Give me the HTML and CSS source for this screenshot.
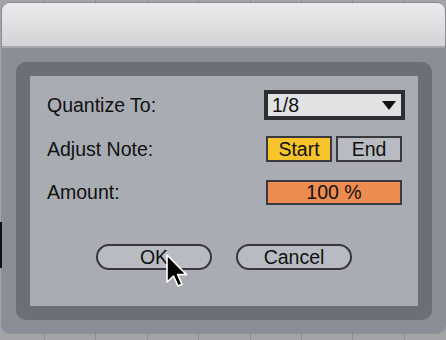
FILE: index.html
```html
<!DOCTYPE html>
<html>
<head>
<meta charset="utf-8">
<link rel="stylesheet" href="styles.css">
</head>
<body>
<div class="desk">
  <div class="sidebar-mark"></div>
  <div class="window">
    <div class="titlebar"></div>
    <div class="body">
      <div class="frame">
        <div class="panel">
          <div class="rows">
            <div class="label">Quantize To:</div>
            <div class="dropdown"><span>1/8</span><svg class="tri" width="14" height="9" viewBox="0 0 14 9"><polygon points="0,0 14,0 7,9" fill="#111"/></svg></div>
            <div class="label label-mid">Adjust Note:</div>
            <div class="toggles"><div class="tog on">Start</div><div class="tog">End</div></div>
            <div class="label">Amount:</div>
            <div class="amount">100 %</div>
          </div>
          <div class="buttons">
            <div class="btn">OK</div>
            <div class="btn">Cancel</div>
          </div>
        </div>
      </div>
    </div>
  </div>
  <svg class="cursor" width="26" height="36" viewBox="0 0 26 36"><path d="M2 2 L2 29 L8.5 23 L13 33 L17 31.2 L12.6 21.6 L21.5 21.6 Z" fill="#000" stroke="#fff" stroke-width="1.6" stroke-linejoin="round"/></svg>
</div>
</body>
</html>
```
FILE: styles.css
```css
html, body { margin: 0; padding: 0; }
body {
  width: 446px;
  height: 340px;
  overflow: hidden;
  font-family: "Liberation Sans", Arial, sans-serif;
}
.desk {
  position: relative;
  width: 446px;
  height: 340px;
  background-color: #a3a4a7;
  background-image: repeating-linear-gradient(90deg, transparent 0 44px, #8e8f92 44px 45px, transparent 45px 51.4px);
  padding: 3px 1px 0 2px;
  box-sizing: border-box;
}
.sidebar-mark {
  position: absolute;
  left: 0;
  top: 222px;
  width: 2px;
  height: 46px;
  background: #111;
}
.window {
  height: 330px;
  border-radius: 8px;
  overflow: hidden;
  display: flex;
  flex-direction: column;
  box-shadow: 0 0 0 1px rgba(120,120,124,0.5);
}
.titlebar {
  height: 43px;
  background: linear-gradient(#ebe9eb, #d5d3d5);
  border-bottom: 2px solid #a4a6ab;
}
.body {
  flex: 1;
  background: #8b8e96;
  padding: 14px 13px 13px 14px;
  display: flex;
}
.frame {
  flex: 1;
  background: #6c6f77;
  border-radius: 10px;
  padding: 14px;
  display: flex;
}
.panel {
  flex: 1;
  background: #a9acb3;
  padding: 14px 13px 0 17px;
  display: flex;
  flex-direction: column;
}
.rows {
  display: grid;
  grid-template-columns: 217px 141px;
  grid-template-rows: 30px 28px 25px;
  row-gap: 16px;
  align-items: center;
}
.label {
  font-size: 19.5px;
  color: #111;
}
.label-mid { align-self: start; line-height: 26px; }
.dropdown {
  height: 30px;
  box-sizing: border-box;
  border: 4px solid #2d2e32;
  background: #e1e2e4;
  display: flex;
  align-items: center;
  justify-content: space-between;
  padding: 0 5px 0 4px;
  font-size: 19.5px;
  color: #111;
}
.toggles {
  align-self: start;
  display: flex;
  gap: 4px;
  margin-left: 2px;
  width: 136px;
}
.tog {
  flex: 1;
  height: 26px;
  box-sizing: border-box;
  border: 2px solid #38393d;
  background: #b8bbc1;
  display: flex;
  align-items: center;
  justify-content: center;
  font-size: 19.5px;
  color: #111;
}
.tog.on { background: #f7c42b; }
.amount {
  margin-left: 2px;
  width: 136px;
  height: 25px;
  box-sizing: border-box;
  border: 2px solid #3a3b3f;
  background: #ed8c51;
  display: flex;
  align-items: center;
  justify-content: center;
  font-size: 19.5px;
  color: #111;
}
.buttons {
  display: flex;
  justify-content: center;
  gap: 24px;
  margin-top: 39px;
  margin-left: -4px;
}
.btn {
  width: 116px;
  height: 26px;
  box-sizing: border-box;
  border: 2px solid #36373b;
  border-radius: 13px;
  background: #b9bbc2;
  display: flex;
  align-items: center;
  justify-content: center;
  font-size: 19.5px;
  color: #111;
}
.cursor {
  position: absolute;
  left: 165px;
  top: 253px;
}
```
